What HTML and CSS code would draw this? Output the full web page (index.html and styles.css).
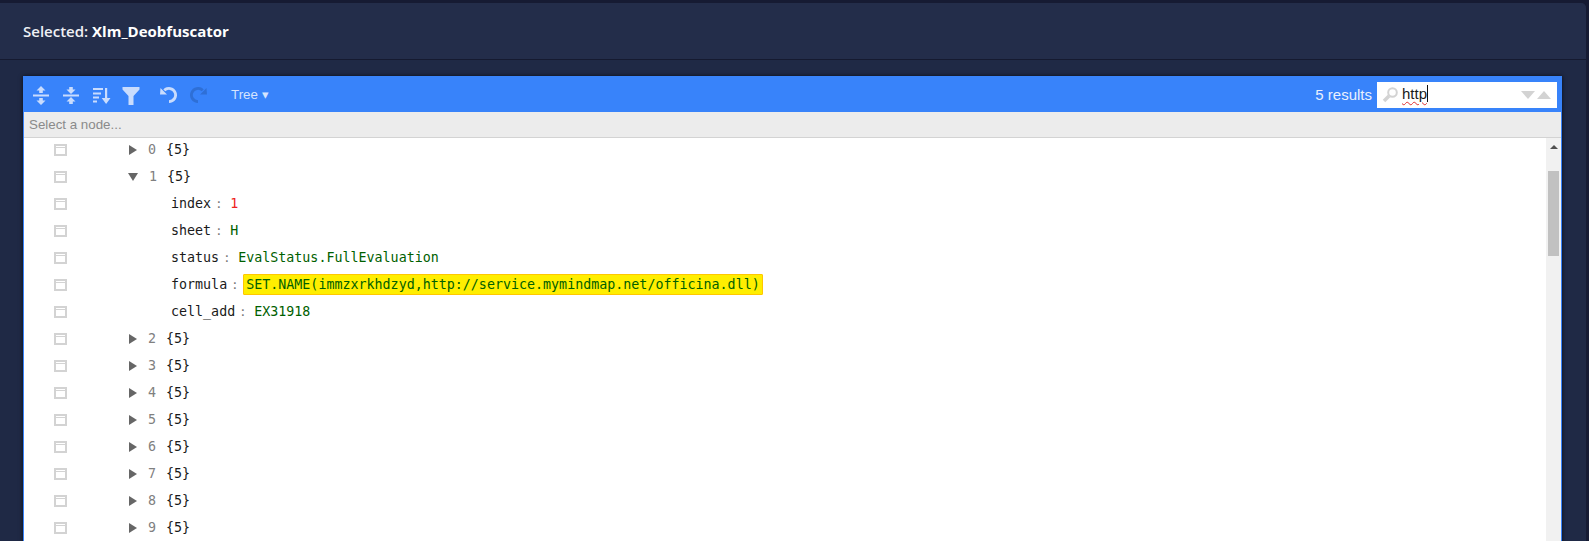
FILE: index.html
```html
<!DOCTYPE html>
<html lang="en">
<head>
<meta charset="utf-8">
<title>Xlm_Deobfuscator</title>
<link rel="stylesheet" href="styles.css">
</head>
<body>
<main class="card">
  <header class="card-head">Selected:&nbsp;<b>Xlm_Deobfuscator</b></header>
  <section class="card-body">
    <div class="editor">
      <div class="menu">
        <svg class="tool" viewBox="0 0 20 24"><path d="M10 3l4.500 4.500h-2.700v2.500H8.200V7.500H5.500zM2 11.400h16v2.200H2zM8.200 15h3.600v2.500h2.700L10 22l-4.500-4.500h2.700z"/></svg>
        <svg class="tool" viewBox="0 0 20 24"><path d="M8.200 4h3.600v2.500h2.700L10 11 5.500 6.500h2.700zM2 11.400h16v2.200H2zM10 14l4.500 4.500h-2.700V21H8.200v-2.500H5.500z"/></svg>
        <svg class="tool" viewBox="0 0 20 24"><path d="M2 5h10v2H2zM2 9.500h8v2H2zM2 13.500h6v2H2zM2 17.500h4v2H2zM14 5h2.200v10h3.300l-4.400 6-4.400-6H14z"/></svg>
        <svg class="tool filter" viewBox="0 0 20 24"><path d="M1.500 4h17v2.500l-6 6.500v9h-5v-9l-6-6.500z"/></svg>
        <svg class="tool undo" viewBox="0 0 20 24"><path d="M2 11.500L2.500 5 9 11.500zM5.300 6.400A8 8 0 1 1 11 20v-2.800A5.200 5.200 0 1 0 7.300 8.300z"/></svg>
        <svg class="tool redo" viewBox="0 0 20 24"><path d="M2 11.500L2.500 5 9 11.500zM5.300 6.400A8 8 0 1 1 11 20v-2.800A5.200 5.200 0 1 0 7.300 8.300z"/></svg>
        <span class="mode">Tree ▾</span>
        <div class="search">
          <span class="count">5 results</span>
          <div class="search-box">
            <svg class="glass" viewBox="0 0 16 16"><circle cx="10.500" cy="5.500" r="4.300"/><path class="handle" d="M7 9L2 14"/></svg>
            <span class="query">http</span>
            <span class="caret"></span>
            <span class="arrow-down"></span>
            <span class="arrow-up"></span>
          </div>
        </div>
      </div>
      <div class="nav">Select a node...</div>
      <div class="tree-wrap">
        <div class="tree">
          <div class="row"><span class="drag"></span><span class="exp collapsed"></span><span class="idx">0</span><span class="obj">{5}</span></div>
          <div class="row"><span class="drag"></span><span class="exp expanded"></span><span class="idx">1</span><span class="obj">{5}</span></div>
          <div class="row child"><span class="drag"></span><span class="key">index</span><span class="sep">:</span><span class="num">1</span></div>
          <div class="row child"><span class="drag"></span><span class="key">sheet</span><span class="sep">:</span><span class="str">H</span></div>
          <div class="row child"><span class="drag"></span><span class="key">status</span><span class="sep">:</span><span class="str">EvalStatus.FullEvaluation</span></div>
          <div class="row child"><span class="drag"></span><span class="key">formula</span><span class="sep">:</span><span class="str hit">SET.NAME(immzxrkhdzyd,http://service.mymindmap.net/officina.dll)</span></div>
          <div class="row child"><span class="drag"></span><span class="key">cell_add</span><span class="sep">:</span><span class="str">EX31918</span></div>
          <div class="row"><span class="drag"></span><span class="exp collapsed"></span><span class="idx">2</span><span class="obj">{5}</span></div>
          <div class="row"><span class="drag"></span><span class="exp collapsed"></span><span class="idx">3</span><span class="obj">{5}</span></div>
          <div class="row"><span class="drag"></span><span class="exp collapsed"></span><span class="idx">4</span><span class="obj">{5}</span></div>
          <div class="row"><span class="drag"></span><span class="exp collapsed"></span><span class="idx">5</span><span class="obj">{5}</span></div>
          <div class="row"><span class="drag"></span><span class="exp collapsed"></span><span class="idx">6</span><span class="obj">{5}</span></div>
          <div class="row"><span class="drag"></span><span class="exp collapsed"></span><span class="idx">7</span><span class="obj">{5}</span></div>
          <div class="row"><span class="drag"></span><span class="exp collapsed"></span><span class="idx">8</span><span class="obj">{5}</span></div>
          <div class="row"><span class="drag"></span><span class="exp collapsed"></span><span class="idx">9</span><span class="obj">{5}</span></div>
        </div>
        <div class="scrollbar">
          <span class="scroll-up"></span>
          <span class="thumb"></span>
        </div>
      </div>
    </div>
  </section>
</main>
</body>
</html>
```

FILE: styles.css
```css
* { box-sizing: border-box; }
html, body { height: 100%; }
body {
  margin: 0;
  padding: 3px 3px 0 0;
  background: #161b33;
  overflow: hidden;
  font-family: "Liberation Sans", Arial, sans-serif;
}
.card {
  height: 100%;
  background: #1f2945;
  border-top-right-radius: 5px;
  overflow: hidden;
}
.card-head {
  display: flex;
  align-items: center;
  height: 57px;
  padding-left: 23px;
  padding-bottom: 1px;
  background: #232d4a;
  border-bottom: 1px solid #151a30;
  color: #eef0f4;
  font-family: "Open Sans", sans-serif;
  font-size: 15px;
  font-weight: 600;
}
.card-head b { font-weight: 700; color: #fff; }
.card-body { padding: 16px 24px 0 23px; }
.editor {
  border: 1px solid #3883fa;
  border-bottom: 0;
  background: #fff;
  box-shadow: 0 0 4px rgba(0, 0, 0, .7);
  height: 470px;
}
.menu {
  display: flex;
  align-items: center;
  height: 35px;
  background: #3883fa;
  padding-left: 7px;
}
.tool { width: 20px; height: 24px; margin-right: 10px; fill: #c9dcfd; flex: none; }
.filter { margin-right: 17px; }
.undo { margin-right: 11px; }
.redo { fill: #2e6fd6; margin-right: 0; transform: scaleX(-1); }
.mode { margin-left: 22px; color: #d5e4fe; font-size: 13.33px; }
.search { margin-left: auto; display: flex; align-items: center; padding-right: 4px; }
.count { color: #eaf1fe; font-size: 15px; margin-right: 5px; }
.search-box {
  position: relative;
  display: flex;
  align-items: center;
  width: 180px;
  height: 26px;
  background: #fff;
  padding-left: 5px;
}
.glass { width: 16px; height: 16px; margin-right: 4px; fill: none; stroke: #d3d3d3; stroke-width: 2; }
.handle { stroke-width: 3.500; }
.query {
  margin-bottom: 2px;
  color: #1a1a1a;
  font-size: 15px;
  text-decoration: underline wavy #e03030 1px;
  text-underline-offset: 2px;
}
.caret { width: 1px; height: 17px; margin-bottom: 2px; background: #111; }
.arrow-down, .arrow-up {
  width: 0;
  height: 0;
  border-left: 7px solid transparent;
  border-right: 7px solid transparent;
}
.arrow-down { margin-left: auto; border-top: 8px solid #d3d3d3; }
.arrow-up { margin: 0 6px 0 2px; border-bottom: 8px solid #d3d3d3; }
.nav {
  height: 26px;
  padding: 5px 0 0 5px;
  background: #ececec;
  border-bottom: 1px solid #d3d3d3;
  color: #8a8a8a;
  font-size: 13.33px;
}
.tree-wrap { display: flex; height: 410px; }
.tree {
  flex: 1;
  font-family: "DejaVu Sans Mono", monospace;
  font-size: 13.33px;
}
.row { display: flex; align-items: center; height: 27px; padding: 0 0 4px 30px; }
.drag {
  flex: none;
  width: 13px;
  height: 12px;
  margin-right: 62px;
  border: 2px solid #d3d3d3;
  background: linear-gradient(#d3d3d3, #d3d3d3) 0 1px / 100% 1px no-repeat;
}
.exp { flex: none; width: 0; height: 0; }
.collapsed {
  margin: 0 11px 0 0;
  border-left: 8px solid #666;
  border-top: 5px solid transparent;
  border-bottom: 5px solid transparent;
}
.expanded {
  margin: 0 11px 0 -1px;
  border-top: 8px solid #666;
  border-left: 5px solid transparent;
  border-right: 5px solid transparent;
}
.idx { color: #808080; width: 18px; }
.obj { color: #1a1a1a; }
.child .drag { margin-right: 104px; }
.key { color: #1a1a1a; }
.sep { color: #777; margin: 0 11px 0 4px; font-size: 12px; width: 4px; }
.num { color: #ee2222; }
.str { color: #006000; }
.hit {
  margin-left: -3px;
  padding: 0 2px 0 2px;
  height: 21px;
  line-height: 19px;
  background: #ffee00;
  border: 1px solid #ffc700;
  border-radius: 1px;
}
.scrollbar {
  position: relative;
  flex: none;
  width: 15px;
  background: #f1f1f1;
}
.scroll-up {
  position: absolute;
  top: 7px;
  left: 4px;
  border-left: 4px solid transparent;
  border-right: 4px solid transparent;
  border-bottom: 4px solid #505050;
}
.thumb {
  position: absolute;
  top: 33px;
  left: 2px;
  width: 11px;
  height: 85px;
  background: #c1c1c1;
}
```
